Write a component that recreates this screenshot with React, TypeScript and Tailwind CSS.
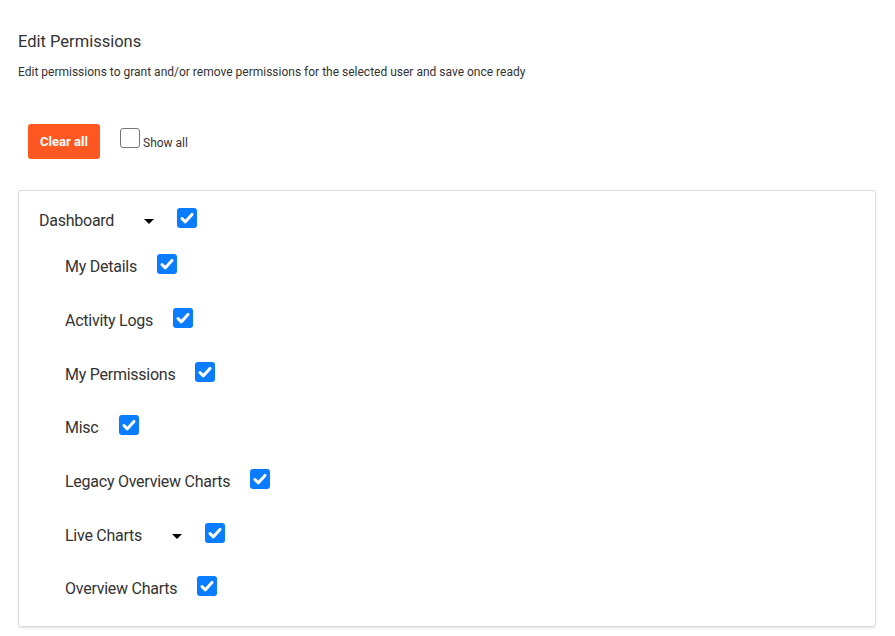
import React from "react";

function Check({ checked = true }: { checked?: boolean }) {
  if (!checked) {
    return <span className="inline-block w-[20px] h-[20px] rounded-[3px] border border-[#767676] bg-white shrink-0" />;
  }
  return (
    <span className="inline-flex items-center justify-center w-[20px] h-[20px] rounded-[3px] bg-[#0a7cff] shrink-0">
      <svg width="20" height="20" viewBox="0 0 20 20">
        <path d="M5 10.6 L8.4 13.8 L15 6.4" fill="none" stroke="white" strokeWidth="3" strokeLinecap="round" strokeLinejoin="round" />
      </svg>
    </span>
  );
}

function Caret() {
  return (
    <svg width="10" height="5" viewBox="0 0 10 5" className="shrink-0">
      <path d="M0 0 L10 0 L5 5 Z" fill="#000" />
    </svg>
  );
}

const items: { label: string; caret?: boolean }[] = [
  { label: "My Details" },
  { label: "Activity Logs" },
  { label: "My Permissions" },
  { label: "Misc" },
  { label: "Legacy Overview Charts" },
  { label: "Live Charts", caret: true },
  { label: "Overview Charts" },
];

export default function App() {
  return (
    <div className="w-[895px] h-[636px] bg-white text-[#333] px-[18px] pt-[30px]" style={{ fontFamily: "Roboto, 'Liberation Sans', sans-serif" }}>
      <div className="text-[16.5px] leading-[24px] text-[#333]">Edit Permissions</div>
      <div className="text-[12px] leading-[16px] mt-[10px] text-[#333]">
        Edit permissions to grant and/or remove permissions for the selected user and save once ready
      </div>
      <div className="flex items-start mt-[44px] pl-[10px]">
        <button className="w-[72px] h-[35px] rounded-[3px] bg-[#ff5722] text-white text-[13px] font-bold">Clear all</button>
        <label className="flex items-end ml-[20px] mt-[4px]">
          <Check checked={false} />
          <span className="text-[12px] leading-[14px] ml-[3px] mb-[-2px] text-[#333]">Show all</span>
        </label>
      </div>
      <div className="mt-[31px] w-[858px] h-[437px] border border-[#dcdcdc] rounded-[3px] shadow-[0_1px_2px_rgba(0,0,0,0.12)] pl-[20px] pt-[20px] text-[16px] tracking-[-0.25px]">
        <div className="flex items-center h-[20px]">
          <span className="mt-[-1px]">Dashboard</span>
          <span className="ml-[30px]"><Caret /></span>
          <span className="ml-[23px]"><Check /></span>
        </div>
        <div className="pl-[26px] pt-[10px]">
          {items.map((it) => (
            <div key={it.label} className="flex items-center h-[53.67px]">
              <span className="mt-[-1px]">{it.label}</span>
              {it.caret ? (
                <>
                  <span className="ml-[30px]"><Caret /></span>
                  <span className="ml-[23px]"><Check /></span>
                </>
              ) : (
                <span className="ml-[20px]"><Check /></span>
              )}
            </div>
          ))}
        </div>
      </div>
    </div>
  );
}
